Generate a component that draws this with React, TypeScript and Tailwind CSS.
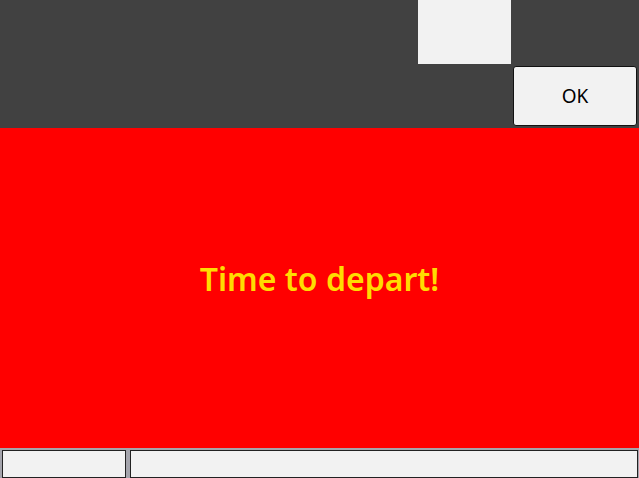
const App = () => {
  return (
    <div className="flex h-[478px] w-[639px] flex-col overflow-hidden font-['Noto_Sans',sans-serif]">
      {/* Top bar */}
      <div className="flex h-[128px] flex-col items-end bg-[#414141]">
        <div className="mr-[128px] h-[64px] w-[93px] bg-[#f2f2f2]" />
        <button className="mr-[2px] mt-[2px] h-[60px] w-[124px] rounded-[3px] border border-[#111] bg-[#f2f2f2] text-[19px] text-black">
          OK
        </button>
      </div>

      {/* Alert */}
      <div className="flex flex-1 items-center justify-center bg-[#ff0000] pb-[18px]">
        <span className="text-[32px] font-semibold text-[#ffdc00]">Time to depart!</span>
      </div>

      {/* Status bar */}
      <div className="flex h-[30px] gap-[4px] bg-[#a4a4ac] pl-[2px] pr-[1px] pt-[2px]">
        <div className="w-[124px] border border-[#222] bg-[#f2f2f2]" />
        <div className="flex-1 border border-[#222] bg-[#f2f2f2]" />
      </div>
    </div>
  );
};

export default App;
